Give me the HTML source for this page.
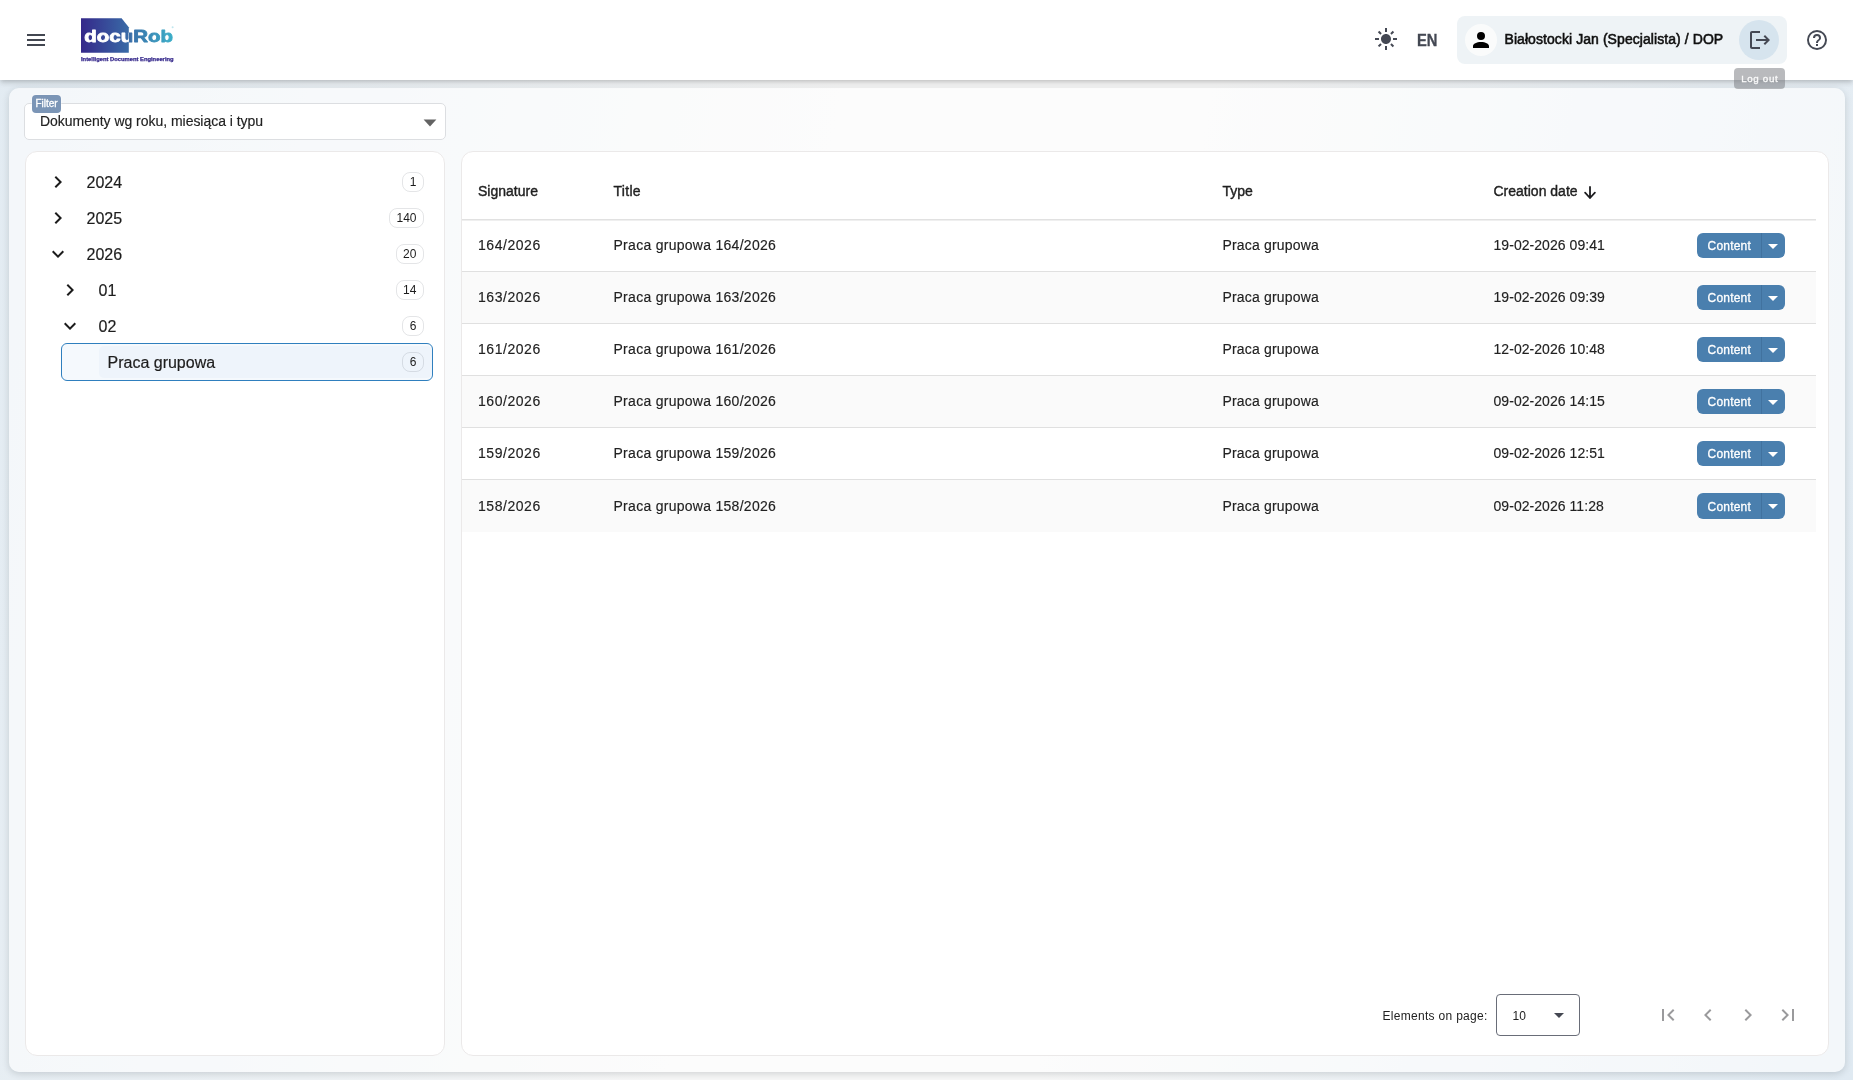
<!DOCTYPE html>
<html lang="en">
<head>
<meta charset="utf-8">
<title>docuRob</title>
<style>
*{box-sizing:border-box;margin:0;padding:0}
html,body{width:1853px;height:1080px;overflow:hidden}
body{font-family:"Liberation Sans",sans-serif;color:#1f1f1f;background:linear-gradient(100deg,#e2ebf2 0%,#eef2f5 24%,#f7f7f7 42%,#f7f7f7 60%,#ecf1f5 78%,#e0eaf2 100%);position:relative}
#wrap{position:absolute;left:0;top:0;width:1853px;height:1080px;will-change:transform}
.abs{position:absolute}
svg{display:block}
/* header */
#hdr{position:absolute;left:0;top:0;width:1853px;height:80px;background:#fff;box-shadow:0 2px 4px -1px rgba(0,0,0,.13),0 4px 5px 0 rgba(0,0,0,.08),0 1px 10px 0 rgba(0,0,0,.07);z-index:5}
#chip{position:absolute;left:1457px;top:16px;width:330px;height:48px;border-radius:8px;background:#eef3f6}
#avatar{position:absolute;left:1465px;top:24px;width:32px;height:32px;border-radius:50%;background:#fafbfb}
#uname{position:absolute;left:1504.5px;top:31px;font-size:14px;line-height:16px;font-weight:normal;-webkit-text-stroke:.55px #101010;letter-spacing:.07px;color:#101010;white-space:nowrap}
#lo{position:absolute;left:1739px;top:20px;width:40px;height:40px;border-radius:50%;background:#d6e4ee}
#en{position:absolute;left:1416.8px;top:32px;font-size:16px;line-height:18px;font-weight:bold;color:#444853;-webkit-text-stroke:.3px #444853;white-space:nowrap;transform:scaleX(.92);transform-origin:0 0}
#tip{position:absolute;left:1734px;top:68px;width:51px;height:21px;border-radius:4px;background:rgba(120,122,128,.52);color:rgba(255,255,255,.9);-webkit-text-stroke:.3px rgba(255,255,255,.9);letter-spacing:.65px;font-size:9.8px;line-height:21px;text-align:center;z-index:9;white-space:nowrap;padding-left:.5px}
/* main card */
#outer{position:absolute;left:9px;top:88px;width:1836px;height:984px;border-radius:10px;background:rgba(255,255,255,.6);box-shadow:0 2px 7px rgba(30,40,50,.17)}
#sel{position:absolute;left:24px;top:103px;width:422px;height:37px;border:1px solid #dcdee1;border-radius:5px;background:#fff}
#sel span{position:absolute;left:15px;top:9px;font-size:14px;line-height:16px;color:#222;-webkit-text-stroke:.15px #222;letter-spacing:-.03px;white-space:nowrap}
#flt{position:absolute;left:32px;top:95px;width:29px;height:18px;border-radius:4px;background:#7b95b6;color:#fff;font-size:10px;letter-spacing:0px;line-height:18px;text-align:center;font-weight:normal;-webkit-text-stroke:.3px #fff;box-shadow:0 0 0 1px rgba(255,255,255,.35)}
#tree{position:absolute;left:25px;top:151px;width:420px;height:905px;border:1px solid #ebe9e9;border-radius:12px;background:#fff}
#tbl{position:absolute;left:461px;top:151px;width:1368px;height:905px;border:1px solid #ebe9e9;border-radius:12px;background:#fff}
.tl{position:absolute;font-size:16px;line-height:20px;color:#1d1d1d;-webkit-text-stroke:.18px #1d1d1d;white-space:nowrap}
.bd{position:absolute;height:20px;border:1px solid rgba(20,30,45,.115);border-radius:8px;background:transparent;font-size:12px;line-height:19px;text-align:center;color:#1c1c1c}
.chev{position:absolute;width:24px;height:24px}
#selrow{position:absolute;left:61px;top:343px;width:372px;height:38px;border:1px solid #2f7fbe;border-radius:6px;background:#f5f9fd}
#selrow i{position:absolute;left:37px;top:2px;right:0;bottom:2px;background:#eef4fb;border-radius:5px}
/* table */
.th{position:absolute;top:183px;font-size:14px;line-height:16px;font-weight:normal;-webkit-text-stroke:.4px #1f1f1f;color:#1f1f1f;white-space:nowrap}
.row{position:absolute;left:462px;width:1354px;height:52px;box-shadow:inset 0 -1px 0 #e0e0e0}
.row.alt{background:#fafafa}
.row span{position:absolute;top:16.5px;font-size:14px;line-height:16px;color:#222;-webkit-text-stroke:.15px #222;white-space:nowrap;letter-spacing:.2px}
.row .c1{left:16px;letter-spacing:.55px}.row .c2{left:151.5px;letter-spacing:.28px}.row .c3{left:760.5px;letter-spacing:.18px}.row .c4{left:1031.5px;letter-spacing:.05px}
.btn{position:absolute;left:1235px;top:13px;width:88px;height:25px;border-radius:6px;background:#4a7fae}
.btn b{position:absolute;left:0;top:0;width:64.5px;padding-left:1px;height:25px;border-right:1px solid #41729f;color:#fff;font-size:12px;line-height:27px;font-weight:normal;-webkit-text-stroke:.3px #fff;letter-spacing:.2px;text-align:center}
.btn svg{position:absolute;left:64px;top:.5px}
.row.last{box-shadow:none}.row.last span{top:17.5px}.row.last .btn{height:26px}.row.last .btn b{height:26px;line-height:28px}.row.last .btn svg{top:1px}
#hline{position:absolute;left:462px;top:219px;width:1354px;height:2px;background:linear-gradient(#e1e1e1 50%,#efefef 50%)}
/* footer */
#eop{position:absolute;left:1382.5px;top:1008px;font-size:12px;line-height:16px;color:#222;white-space:nowrap;letter-spacing:.3px}
#psel{position:absolute;left:1496px;top:994px;width:84px;height:42px;border:1px solid #696d78;border-radius:4px;background:#fff}
#psel span{position:absolute;left:15.5px;top:13px;font-size:12px;line-height:16px;color:#222}
</style>
</head>
<body>
<div id="wrap">
<div id="hdr">
<svg class="abs" style="left:24px;top:28px" width="24" height="24" viewBox="0 0 24 24"><path fill="#434751" d="M3,6H21V8H3V6M3,11H21V13H3V11M3,16H21V18H3V16Z"/></svg>
<svg class="abs" style="left:76px;top:12px" width="104" height="56" viewBox="76 12 104 56">
<defs>
<linearGradient id="lg1" gradientUnits="userSpaceOnUse" x1="81" y1="0" x2="174" y2="0"><stop offset="0" stop-color="#35288a"/><stop offset=".5" stop-color="#3969a6"/><stop offset="1" stop-color="#3bb0c9"/></linearGradient>
<clipPath id="cp1"><polygon points="81,18.2 121.6,18.2 128.8,27.2 128.8,52.8 81,52.8"/></clipPath>
</defs>
<text x="84.3" y="41.9" font-family="Liberation Sans" font-weight="bold" font-size="16.9" textLength="88.6" lengthAdjust="spacingAndGlyphs" fill="url(#lg1)" stroke="url(#lg1)" stroke-width=".8" stroke-linejoin="round">docuRob</text>
<polygon points="81,18.2 121.6,18.2 128.8,27.2 128.8,52.8 81,52.8" fill="url(#lg1)"/>
<g clip-path="url(#cp1)"><text x="84.3" y="41.9" font-family="Liberation Sans" font-weight="bold" font-size="16.9" textLength="88.6" lengthAdjust="spacingAndGlyphs" fill="#fff" stroke="#fff" stroke-width=".8" stroke-linejoin="round">docuRob</text></g>
<circle cx="172.6" cy="27.3" r="1" fill="#bfe6ee"/>
<text x="81" y="60.6" font-family="Liberation Sans" font-weight="bold" font-size="5.7" textLength="92.6" lengthAdjust="spacingAndGlyphs" fill="#33268a" stroke="#33268a" stroke-width=".25">Intelligent Document Engineering</text>
</svg>
<svg class="abs" style="left:1374px;top:27px" width="24" height="24" viewBox="0 0 24 24"><path fill="#454954" d="M12,7c-2.76,0-5,2.24-5,5s2.24,5,5,5s5-2.24,5-5S14.76,7,12,7L12,7z M11,1v4h2V1L11,1z M11,19v4h2v-4L11,19z M23,11l-4,0v2l4,0V11z M5,11l-4,0l0,2l4,0L5,11z M16.24,17.66l2.47,2.47l1.41-1.41l-2.47-2.47L16.24,17.66z M3.87,5.28l2.47,2.47l1.41-1.41L5.28,3.87L3.87,5.28z M6.34,16.24l-2.47,2.47l1.41,1.41l2.47-2.47L6.34,16.24z M18.72,3.87l-2.47,2.47l1.41,1.41l2.47-2.47L18.72,3.87z"/></svg>
<div id="en">EN</div>
<div id="chip"></div>
<div id="avatar"></div>
<svg class="abs" style="left:1469px;top:28px" width="24" height="24" viewBox="0 0 24 24"><path fill="#000" d="M12,4A4,4 0 0,1 16,8A4,4 0 0,1 12,12A4,4 0 0,1 8,8A4,4 0 0,1 12,4M12,14C16.42,14 20,15.79 20,18V20H4V18C4,15.79 7.58,14 12,14Z"/></svg>
<div id="uname">Białostocki Jan (Specjalista) / DOP</div>
<div id="lo"></div>
<svg class="abs" style="left:1747.5px;top:28px" width="24" height="24" viewBox="0 0 24 24"><path fill="#454954" d="M17 7l-1.41 1.41L18.17 11H8v2h10.17l-2.58 2.58L17 17l5-5zM4 5h8V3H4c-1.1 0-2 .9-2 2v14c0 1.1.9 2 2 2h8v-2H4V5z"/></svg>
<svg class="abs" style="left:1805px;top:28px" width="24" height="24" viewBox="0 0 24 24"><path fill="#454954" d="M11,18H13V16H11V18M12,2A10,10 0 0,0 2,12A10,10 0 0,0 12,22A10,10 0 0,0 22,12A10,10 0 0,0 12,2M12,20C7.59,20 4,16.41 4,12C4,7.59 7.59,4 12,4C16.41,4 20,7.59 20,12C20,16.41 16.41,20 12,20M12,6A4,4 0 0,0 8,10H10A2,2 0 0,1 12,8A2,2 0 0,1 14,10C14,12 11,11.75 11,15H13C13,12.75 16,12.5 16,10A4,4 0 0,0 12,6Z"/></svg>
</div>
<div id="tip">Log out</div>
<div id="outer"></div>
<div id="sel"><span>Dokumenty wg roku, miesiąca i typu</span><svg class="abs" style="left:398px;top:14.5px" width="14" height="8" viewBox="0 0 14 8"><path fill="#636363" d="M.6,.5H13.4L7,7.4Z"/></svg></div>
<div id="flt">Filter</div>
<div id="tree"></div>
<svg class="chev" style="left:46px;top:170px" viewBox="0 0 24 24"><path fill="#1c1c1c" d="M8.59,16.58L13.17,12L8.59,7.41L10,6L16,12L10,18L8.59,16.58Z"/></svg>
<div class="tl" style="left:86.5px;top:173px">2024</div>
<div class="bd" style="left:402px;top:172.0px;width:22px">1</div>
<svg class="chev" style="left:46px;top:206px" viewBox="0 0 24 24"><path fill="#1c1c1c" d="M8.59,16.58L13.17,12L8.59,7.41L10,6L16,12L10,18L8.59,16.58Z"/></svg>
<div class="tl" style="left:86.5px;top:209px">2025</div>
<div class="bd" style="left:389px;top:208.0px;width:35px">140</div>
<svg class="chev" style="left:46px;top:242px" viewBox="0 0 24 24"><path fill="#1c1c1c" d="M7.41,8.58L12,13.17L16.59,8.58L18,10L12,16L6,10L7.41,8.58Z"/></svg>
<div class="tl" style="left:86.5px;top:245px">2026</div>
<div class="bd" style="left:395.5px;top:244.0px;width:28.5px">20</div>
<svg class="chev" style="left:58px;top:278px" viewBox="0 0 24 24"><path fill="#1c1c1c" d="M8.59,16.58L13.17,12L8.59,7.41L10,6L16,12L10,18L8.59,16.58Z"/></svg>
<div class="tl" style="left:98.5px;top:281px">01</div>
<div class="bd" style="left:395.5px;top:280.0px;width:28.5px">14</div>
<svg class="chev" style="left:58px;top:314px" viewBox="0 0 24 24"><path fill="#1c1c1c" d="M7.41,8.58L12,13.17L16.59,8.58L18,10L12,16L6,10L7.41,8.58Z"/></svg>
<div class="tl" style="left:98.5px;top:317px">02</div>
<div class="bd" style="left:402px;top:316.0px;width:22px">6</div>
<div id="selrow"><i></i></div>
<div class="tl" style="left:107.5px;top:353px">Praca grupowa</div>
<div class="bd" style="left:402px;top:352.0px;width:22px">6</div>
<div id="tbl"></div>
<div class="th" style="left:478px">Signature</div>
<div class="th" style="left:613.5px;letter-spacing:.3px">Title</div>
<div class="th" style="left:1222.5px">Type</div>
<div class="th" style="left:1493.5px">Creation date</div>
<svg class="abs" style="left:1580px;top:182px" width="20" height="20" viewBox="0 0 20 20"><path d="M10 5V16M5.1 10.7L10 16L14.9 10.7" stroke="#1c1c1f" stroke-width="1.8" fill="none" stroke-linecap="round" stroke-linejoin="round"/></svg>
<div id="hline"></div>
<div class="row" style="top:220px;"><span class="c1">164/2026</span><span class="c2">Praca grupowa 164/2026</span><span class="c3">Praca grupowa</span><span class="c4">19-02-2026 09:41</span><div class="btn"><b>Content</b><svg width="24" height="24" viewBox="0 0 24 24"><path fill="#fff" d="M7,10L12,15L17,10H7Z"/></svg></div></div>
<div class="row alt" style="top:272px;"><span class="c1">163/2026</span><span class="c2">Praca grupowa 163/2026</span><span class="c3">Praca grupowa</span><span class="c4">19-02-2026 09:39</span><div class="btn"><b>Content</b><svg width="24" height="24" viewBox="0 0 24 24"><path fill="#fff" d="M7,10L12,15L17,10H7Z"/></svg></div></div>
<div class="row" style="top:324px;"><span class="c1">161/2026</span><span class="c2">Praca grupowa 161/2026</span><span class="c3">Praca grupowa</span><span class="c4">12-02-2026 10:48</span><div class="btn"><b>Content</b><svg width="24" height="24" viewBox="0 0 24 24"><path fill="#fff" d="M7,10L12,15L17,10H7Z"/></svg></div></div>
<div class="row alt" style="top:376px;"><span class="c1">160/2026</span><span class="c2">Praca grupowa 160/2026</span><span class="c3">Praca grupowa</span><span class="c4">09-02-2026 14:15</span><div class="btn"><b>Content</b><svg width="24" height="24" viewBox="0 0 24 24"><path fill="#fff" d="M7,10L12,15L17,10H7Z"/></svg></div></div>
<div class="row" style="top:428px;"><span class="c1">159/2026</span><span class="c2">Praca grupowa 159/2026</span><span class="c3">Praca grupowa</span><span class="c4">09-02-2026 12:51</span><div class="btn"><b>Content</b><svg width="24" height="24" viewBox="0 0 24 24"><path fill="#fff" d="M7,10L12,15L17,10H7Z"/></svg></div></div>
<div class="row alt last" style="top:480px;"><span class="c1">158/2026</span><span class="c2">Praca grupowa 158/2026</span><span class="c3">Praca grupowa</span><span class="c4">09-02-2026 11:28</span><div class="btn"><b>Content</b><svg width="24" height="24" viewBox="0 0 24 24"><path fill="#fff" d="M7,10L12,15L17,10H7Z"/></svg></div></div>
<div id="eop">Elements on page:</div>
<div id="psel"><span>10</span><svg class="abs" style="left:50px;top:8.4px" width="24" height="24" viewBox="0 0 24 24"><path fill="#454852" d="M7,10L12,15L17,10H7Z"/></svg></div>
<svg class="abs" style="left:1656px;top:1003px" width="24" height="24" viewBox="0 0 24 24"><path fill="#9a9a9c" d="M18.41,16.59L13.82,12L18.41,7.41L17,6L11,12L17,18L18.41,16.59M6,6H8V18H6V6Z"/></svg><svg class="abs" style="left:1696px;top:1003px" width="24" height="24" viewBox="0 0 24 24"><path fill="#9a9a9c" d="M15.41,16.58L10.83,12L15.41,7.41L14,6L8,12L14,18L15.41,16.58Z"/></svg><svg class="abs" style="left:1736px;top:1003px" width="24" height="24" viewBox="0 0 24 24"><path fill="#9a9a9c" d="M8.59,16.58L13.17,12L8.59,7.41L10,6L16,12L10,18L8.59,16.58Z"/></svg><svg class="abs" style="left:1776px;top:1003px" width="24" height="24" viewBox="0 0 24 24"><path fill="#9a9a9c" d="M5.59,7.41L10.18,12L5.59,16.59L7,18L13,12L7,6L5.59,7.41M16,6H18V18H16V6Z"/></svg>
</div>
</body>
</html>
